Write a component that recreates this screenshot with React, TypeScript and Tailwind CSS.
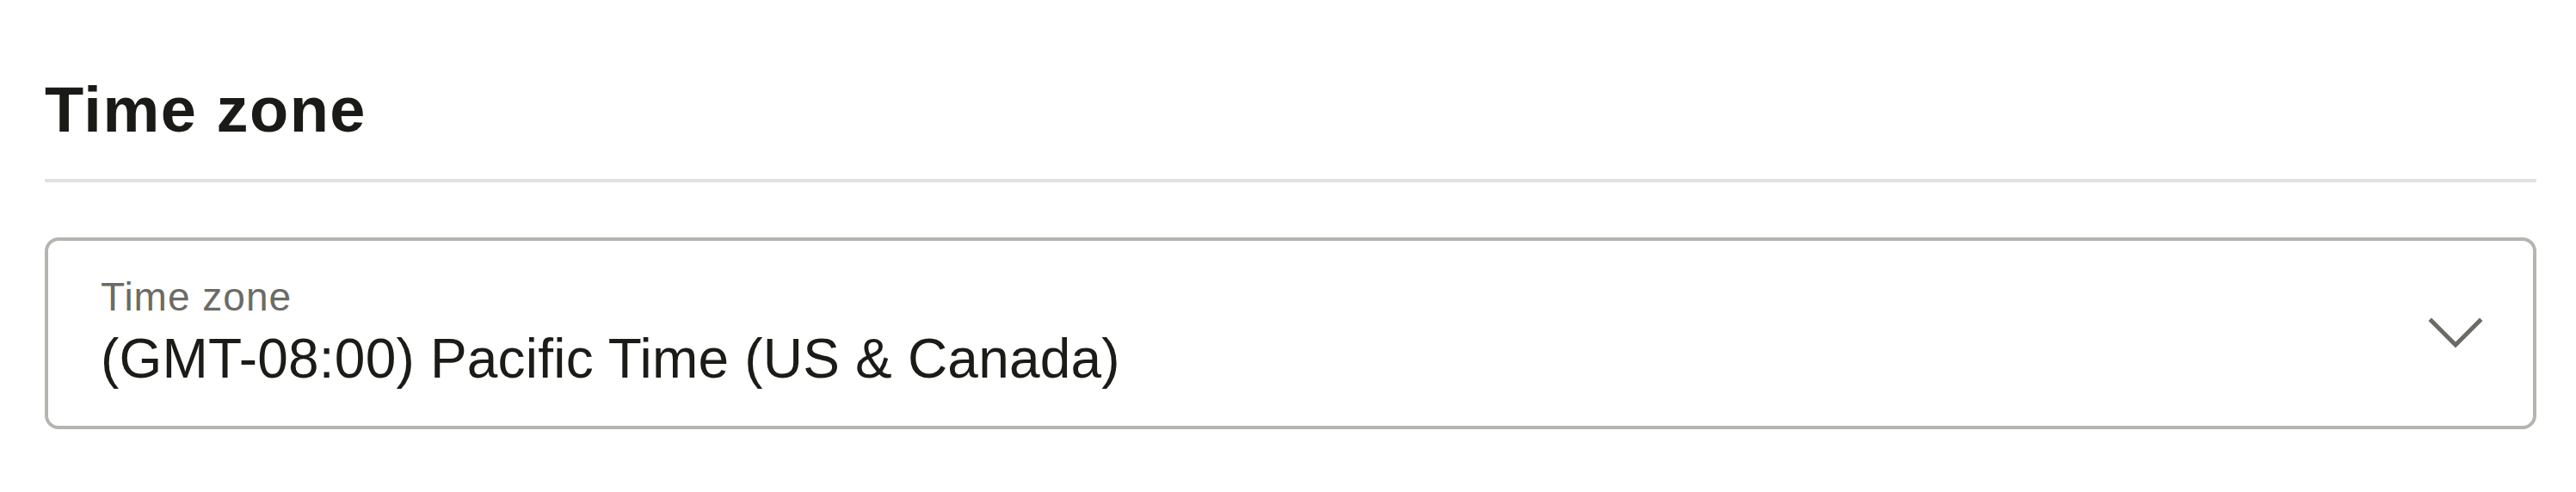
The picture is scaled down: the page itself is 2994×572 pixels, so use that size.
export default function App() {
  return (
    <div className="min-h-screen bg-white pl-[52px] pr-[46px] pt-[91px] font-['Liberation_Sans',Arial,sans-serif] text-[#1a1a16]">
      {/* Section header */}
      <h2 className="text-[74px] leading-[74px] font-bold tracking-[1.5px]">Time zone</h2>
      <div className="mt-[43px] h-[4px] bg-[#e1e1df]" />

      {/* Time zone select */}
      <button
        type="button"
        className="mt-[64px] w-full h-[223px] flex items-center justify-between border-4 border-[#b5b5b0] rounded-[16px] bg-white pl-[61px] pr-[58px] text-left"
      >
        <div className="flex flex-col pb-[4px]">
          <span className="text-[46px] leading-[52px] tracking-[1px] text-[#6b6b66]">Time zone</span>
          <span className="mt-[10px] text-[64px] leading-[72px] tracking-[0.2px] text-[#1b1b17]">
            (GMT-08:00) Pacific Time (US &amp; Canada)
          </span>
        </div>
        <svg width="64" height="40" viewBox="0 0 64 40" fill="none" className="shrink-0 text-[#6b6b66]">
          <path d="M4 5 L32 33 L60 5" stroke="currentColor" strokeWidth="5" strokeLinecap="square" />
        </svg>
      </button>
    </div>
  );
}
